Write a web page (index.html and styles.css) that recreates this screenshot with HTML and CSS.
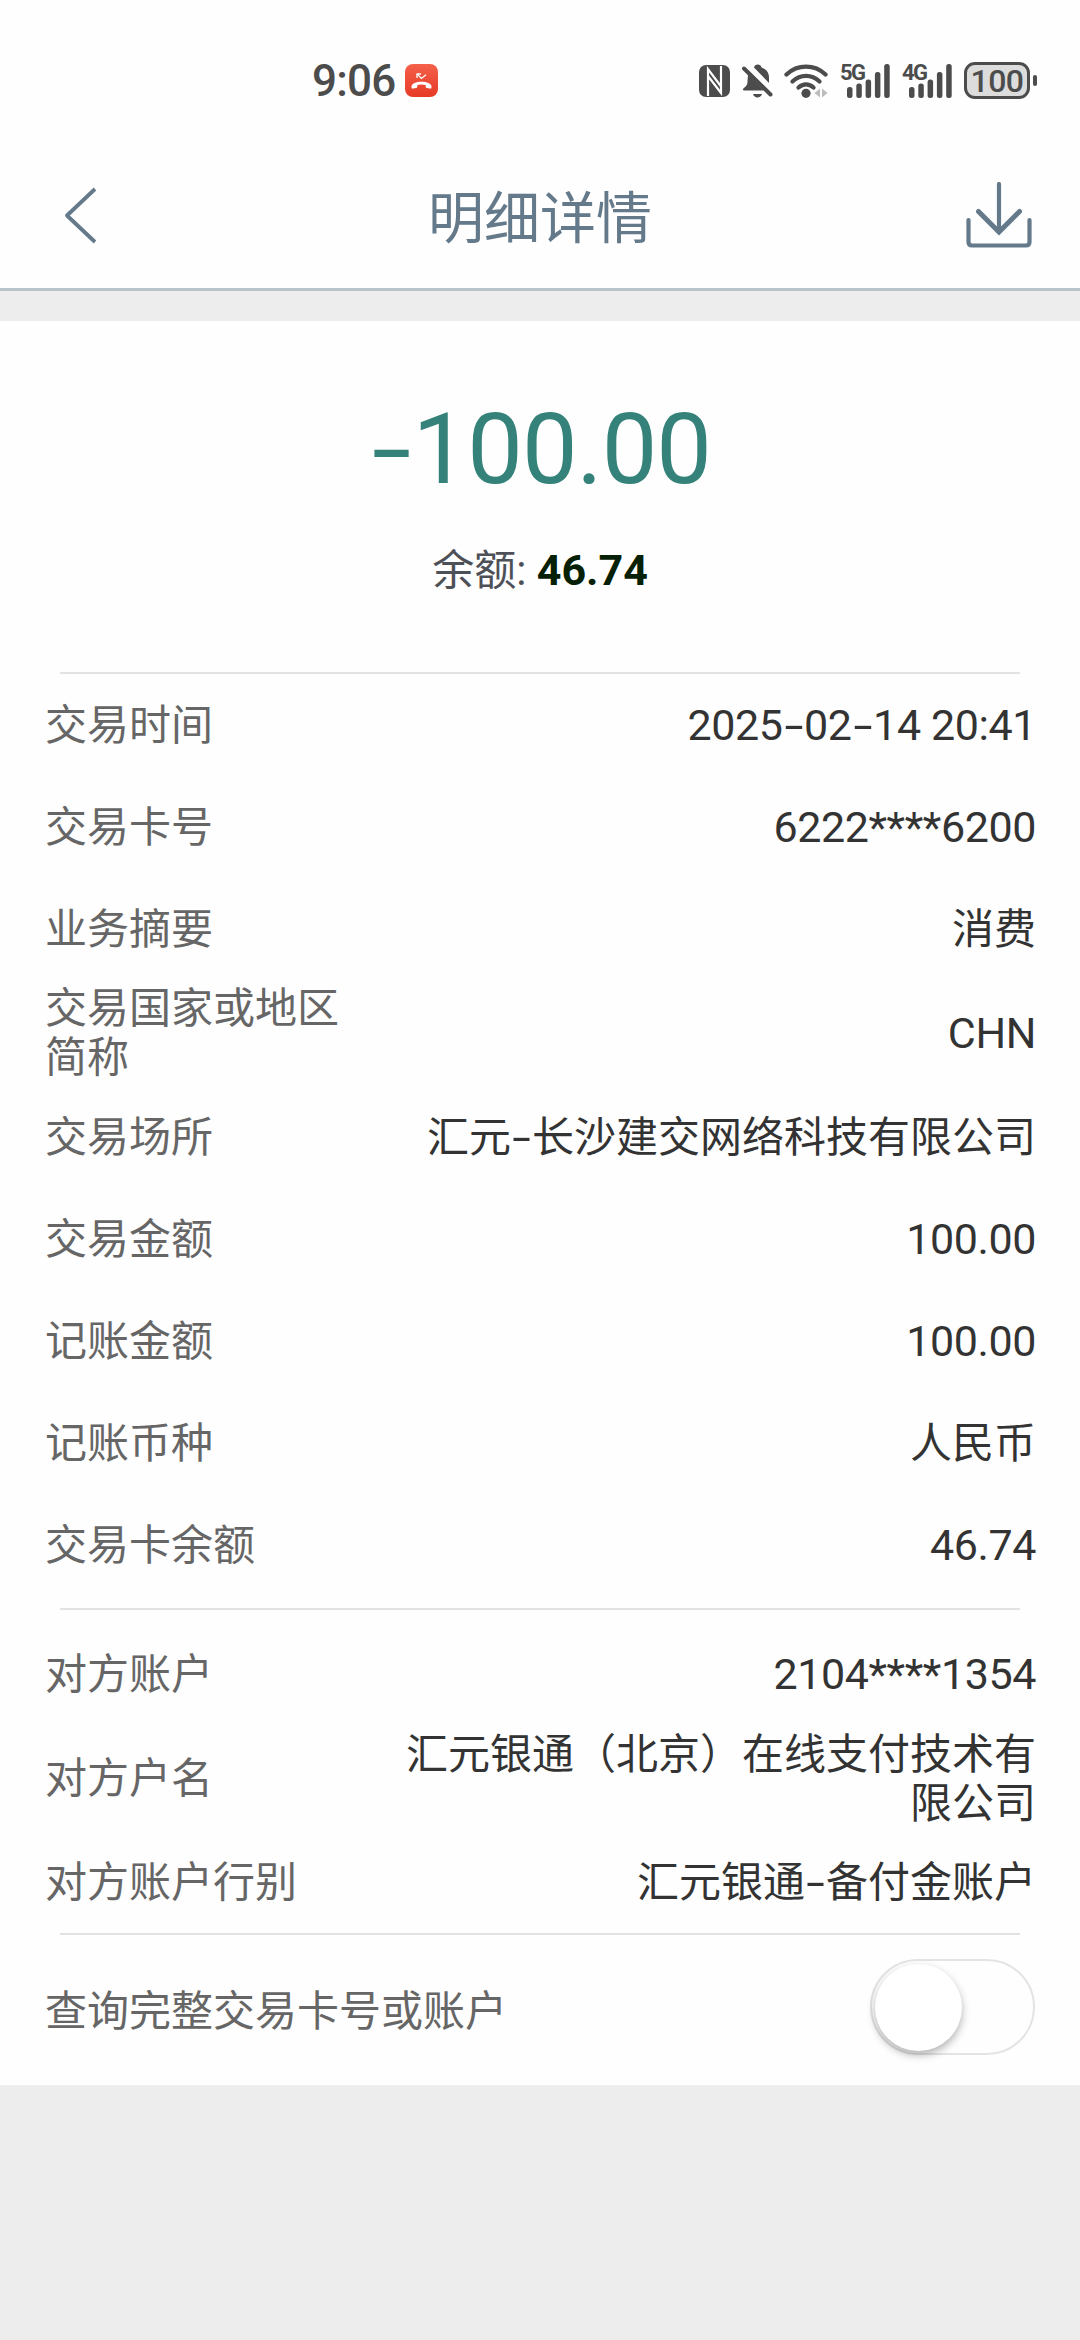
FILE: index.html
```html
<!DOCTYPE html>
<html lang="zh-CN">
<head>
  <meta charset="UTF-8">
  <meta name="viewport" content="width=device-width, initial-scale=1.0">
  <title>明细详情</title>
  <link rel="stylesheet" href="styles.css">
</head>
<body>

<!-- Status Bar -->
<div class="status-bar">
  <div class="status-left">
    <span class="time">9:06</span>
    <svg class="call-icon" width="33" height="33" viewBox="0 0 33 33">
      <defs>
        <linearGradient id="red" x1="0" y1="0" x2="0" y2="1">
          <stop offset="0" stop-color="#f4604a"/>
          <stop offset="1" stop-color="#e63a26"/>
        </linearGradient>
      </defs>
      <rect width="33" height="33" rx="8" fill="url(#red)"/>
      <path d="M12 14V10h4M12.400 10.400l4 4 4.600-3.600" fill="none" stroke="#fff" stroke-width="1.300"/>
      <path d="M6.500 23.500c-.5-3 3-5.700 10-5.700s10.500 2.700 10 5.700c-.1 1-.8 1.300-1.700 1.100l-3-.6c-.9-.2-1.100-.7-1.100-1.500v-1.500c-2.600-.7-5.800-.7-8.400 0v1.500c0 .8-.2 1.300-1.100 1.500l-3 .6c-.9.2-1.600-.1-1.700-1.100z" fill="#fff"/>
    </svg>
  </div>
  <div class="status-right">
    <svg width="31" height="32" viewBox="0 0 31 32">
      <rect width="31" height="32" rx="7" fill="#4c4c4c"/>
      <path d="M9 31V4L22 21.500V11M22 1v27L9 11v11" fill="none" stroke="#fff" stroke-width="2.200"/>
    </svg>
    <svg class="bell" width="31" height="34" viewBox="0 0 31 34">
      <path d="M12 3.500c.5-4 7-4 7.500 0 5 1.500 7.500 5 7.500 10v5.500zM6 10.500L22 26.500H2.500c-2 0-2-2 0-3 2-1.500 3-3 3-6zM11 30h9c-1 4.500-8 4.500-9 0z" fill="#4c4c4c"/>
      <path d="M2 4.500l26.500 26" stroke="#4c4c4c" stroke-width="4" stroke-linecap="round"/>
    </svg>
    <svg class="wifi" width="44" height="34" viewBox="0 0 44 34">
      <g fill="none" stroke="#4c4c4c" stroke-width="4.300" stroke-linecap="round">
        <path d="M2.500 10.500c11-10.500 28-10.500 39 0"/>
        <path d="M8.500 17.500c8-7.500 19-7.500 27 0"/>
        <path d="M14.500 23.500c4.500-4 10.500-4 15 0"/>
      </g>
      <circle cx="22" cy="29.300" r="4.600" fill="#4c4c4c"/>
      <path d="M30.500 29l5.500-4.500v9zM43.500 29l-5.500-4.500v9z" fill="#bdbdbd"/>
    </svg>
    <div class="signal">
      <span class="net">5G</span>
      <svg width="43" height="34" viewBox="0 0 43 34">
        <g fill="#4c4c4c">
          <rect x="0" y="23" width="5.500" height="11" rx="2.500"/>
          <rect x="9.300" y="19.500" width="5.500" height="14.500" rx="2.500"/>
          <rect x="18.600" y="15.500" width="5.500" height="18.500" rx="2.500"/>
          <rect x="27.900" y="8" width="5.500" height="26" rx="2.500"/>
          <rect x="37.200" y="0" width="5.500" height="34" rx="2.500"/>
        </g>
      </svg>
    </div>
    <div class="signal">
      <span class="net">4G</span>
      <svg width="43" height="34" viewBox="0 0 43 34">
        <g fill="#4c4c4c">
          <rect x="0" y="23" width="5.500" height="11" rx="2.500"/>
          <rect x="9.300" y="19.500" width="5.500" height="14.500" rx="2.500"/>
          <rect x="18.600" y="15.500" width="5.500" height="18.500" rx="2.500"/>
          <rect x="27.900" y="8" width="5.500" height="26" rx="2.500"/>
          <rect x="37.200" y="0" width="5.500" height="34" rx="2.500"/>
        </g>
      </svg>
    </div>
    <div class="battery">100</div>
    <div class="battery-tip"></div>
  </div>
</div>

<!-- Header -->
<header>
  <svg width="66" height="60" viewBox="0 0 66 60">
    <path d="M33 4L5 30.500 33 57" fill="none" stroke="#64798a" stroke-width="3.800" stroke-linejoin="round"/>
  </svg>
  <h1>明细详情</h1>
  <svg width="66" height="66" viewBox="0 0 66 66">
    <g fill="none" stroke="#64798a" stroke-width="4.200" stroke-linecap="round">
      <path d="M33 2v48"/>
      <path d="M12.500 29.500L33 50l20.500-20.500" stroke-width="5"/>
      <path d="M2.500 38v22q0 3.500 3.500 3.500h54q3.500 0 3.500-3.500V38"/>
    </g>
  </svg>
</header>

<main>
  <!-- Amount -->
  <section class="summary">
    <div class="amount"><span class="dash">-</span>100.00</div>
    <div class="balance">余额: <b>46.74</b></div>
  </section>

  <!-- Transaction Details -->
  <section class="details">
    <div class="row"><span class="label">交易时间</span><span class="value num">2025<span class="dash">-</span>02<span class="dash">-</span>14 20:41</span></div>
    <div class="row"><span class="label">交易卡号</span><span class="value num">6222****6200</span></div>
    <div class="row"><span class="label">业务摘要</span><span class="value">消费</span></div>
    <div class="row tall"><span class="label">交易国家或地区简称</span><span class="value num">CHN</span></div>
    <div class="row"><span class="label">交易场所</span><span class="value">汇元<span class="dash">-</span>长沙建交网络科技有限公司</span></div>
    <div class="row"><span class="label">交易金额</span><span class="value num">100.00</span></div>
    <div class="row"><span class="label">记账金额</span><span class="value num">100.00</span></div>
    <div class="row"><span class="label">记账币种</span><span class="value">人民币</span></div>
    <div class="row"><span class="label">交易卡余额</span><span class="value num">46.74</span></div>
  </section>

  <!-- Counterparty -->
  <section class="details party">
    <div class="row"><span class="label">对方账户</span><span class="value num">2104****1354</span></div>
    <div class="row tall"><span class="label">对方户名</span><span class="value">汇元银通（北京）在线支付技术有限公司</span></div>
    <div class="row"><span class="label">对方账户行别</span><span class="value">汇元银通<span class="dash">-</span>备付金账户</span></div>
  </section>

  <section class="details query">
    <span>查询完整交易卡号或账户</span>
    <div class="switch"><div class="knob"></div></div>
  </section>
</main>

</body>
</html>
```

FILE: styles.css
```css
* {
  margin: 0;
  padding: 0;
  box-sizing: border-box;
}

body {
  font-family: Roboto, "Noto Sans CJK SC", sans-serif;
  font-size: 42px;
  background-color: #ededed;
}

svg {
  display: block;
  flex-shrink: 0;
}

/* Status Bar */
.status-bar {
  height: 130px;
  padding: 29px 43px 0 312px;
  display: flex;
  justify-content: space-between;
  background-color: #fefefe;
  color: #4c4c4c;
}

.status-left, .status-right {
  height: 103px;
  display: flex;
  align-items: center;
}

.time {
  font-size: 44px;
  font-weight: 500;
  line-height: 52px;
  letter-spacing: -0.8px;
}

.call-icon {
  margin-left: 10px;
}

.bell {
  margin-left: 12px;
}

.wifi {
  margin-left: 11px;
}

.signal {
  position: relative;
  margin-left: 19px;
}

.net {
  position: absolute;
  left: -7px;
  top: -2px;
  font-size: 22px;
  font-weight: 700;
  line-height: 22px;
  letter-spacing: -1.5px;
}

.battery {
  width: 66px;
  height: 37px;
  margin-left: 12px;
  border: 3px solid #4c4c4c;
  border-radius: 11px;
  background-color: #dcdcdc;
  font-size: 32px;
  font-weight: 500;
  line-height: 32px;
  letter-spacing: -0.5px;
  text-align: center;
}

.battery-tip {
  width: 4px;
  height: 11px;
  margin-left: 3px;
  border-radius: 2px;
  background-color: #4c4c4c;
}

/* Header */
header {
  height: 161px;
  padding: 12px 48px 0 62px;
  display: flex;
  align-items: center;
  justify-content: space-between;
  border-bottom: 3px solid #b9c4ca;
  background-color: #fefefe;
}

h1 {
  margin: -4px 0 0 -14px;
  font-size: 56px;
  font-weight: 400;
  color: #64798a;
}

main {
  margin-top: 30px;
  height: 1764px;
  background-color: #fefefe;
}

/* Amount */
.summary {
  height: 351px;
  padding-top: 78px;
  text-align: center;
}

.amount {
  font-size: 99px;
  line-height: 100px;
  letter-spacing: -1px;
  color: #35827a;
}

.amount .dash {
  width: 0.44em;
  transform: scaleX(1.45);
}

.balance {
  margin-top: 41px;
  line-height: 60px;
  color: #4d5057;
}

.balance b {
  font-size: 43px;
  color: #062006;
}

/* widened hyphen */
.dash {
  display: inline-block;
  width: 0.5em;
  text-align: center;
  transform: scaleX(1.6);
}

/* Details */
.details {
  position: relative;
  padding: 2px 45px 0;
}

.details::before {
  content: "";
  position: absolute;
  top: 0;
  left: 60px;
  right: 60px;
  height: 2px;
  background-color: #e2e2e2;
}

.row {
  height: 102px;
  display: flex;
  align-items: center;
  justify-content: space-between;
  line-height: 49px;
}

.tall {
  height: 106px;
}

.label {
  width: 300px;
  color: #666;
}

.value {
  width: 640px;
  margin-right: -1px;
  padding-top: 1px;
  text-align: right;
  color: #333;
}

.num {
  font-size: 43px;
  letter-spacing: -0.4px;
}

.party {
  margin-top: 12px;
  padding-top: 15px;
}

.query {
  height: 148px;
  padding-top: 0;
  display: flex;
  align-items: center;
  justify-content: space-between;
  color: #666;
}

.switch {
  width: 165px;
  height: 96px;
  padding: 3px;
  border: 2px solid #e4e4e4;
  border-radius: 48px;
}

.knob {
  width: 87px;
  height: 87px;
  border-radius: 50%;
  background-color: #fff;
  box-shadow: 0 4px 9px rgba(0, 0, 0, 0.3);
}
```
